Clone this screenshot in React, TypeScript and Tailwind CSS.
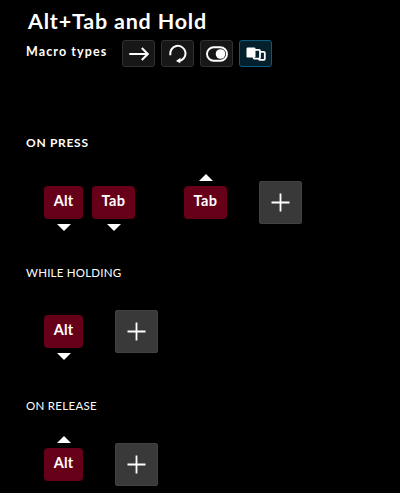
import type { ReactNode } from "react";

function TypeButton({ active, children }: { active?: boolean; children: ReactNode }) {
  return (
    <button
      className={
        "flex h-[27px] w-[33px] items-center justify-center rounded-[3px] border " +
        (active ? "border-[#075c7c] bg-[#03202c]" : "border-[#303030] bg-[#171717]")
      }
    >
      {children}
    </button>
  );
}

function Arrow({ up }: { up?: boolean }) {
  return (
    <svg width="14" height="7" viewBox="0 0 14 7" fill="#fff">
      <path d={up ? "M0 7 7 0l7 7z" : "M0 0h14L7 7z"} />
    </svg>
  );
}

function Key({ label, dir }: { label: string; dir: "up" | "down" }) {
  const wide = label === "Tab";
  return (
    <div className="flex flex-col items-center">
      <div className="h-3">{dir === "up" && <Arrow up />}</div>
      <div
        className={
          "flex h-[33px] items-center justify-center rounded-[4px] bg-[#650018] pb-[2px] text-[14.5px] font-bold leading-none " +
          (wide ? "w-[43px] tracking-[0.5px]" : "w-[39px] tracking-[0.1px]")
        }
      >
        {label}
      </div>
      <div className="flex h-3 items-end">{dir === "down" && <Arrow />}</div>
    </div>
  );
}

function AddButton() {
  return (
    <button className="flex size-[43px] items-center justify-center rounded-[2px] border border-[#424242] bg-[#393939]">
      <svg width="19" height="19" viewBox="0 0 19 19" stroke="#fff" strokeWidth="1.8">
        <path d="M9.5 0.5v18M0.5 9.5h18" />
      </svg>
    </button>
  );
}

export default function App() {
  return (
    <main className="h-[493px] w-[400px] overflow-hidden bg-black font-['Lato',sans-serif] text-white">
      <h1 className="h-10 whitespace-nowrap pl-[28px] pt-[9px] text-[21.5px] font-bold leading-[24px] tracking-[0.8px]">
        Alt+Tab and Hold
      </h1>
      <div className="flex h-[27px] pl-[26px]">
        <span className="w-[96px] whitespace-nowrap pt-[4px] text-[12.5px] font-bold leading-4 tracking-[1.1px]">
          Macro types
        </span>
        <div className="flex gap-[6px]">
          <TypeButton>
            <svg width="20" height="14" viewBox="0 0 20 14" fill="none" stroke="#fff" strokeWidth="2">
              <path d="M0.3 7h18M12.8 1 18.8 7l-6 6" />
            </svg>
          </TypeButton>
          <TypeButton>
            <svg width="18" height="20" viewBox="0 0 18 20" fill="none" stroke="#fff" strokeWidth="2">
              <path d="M1.5 11.2A7.6 7.6 0 1 1 10 17" />
              <path d="M11.5 13.8 7 17l4.2 2.2z" fill="#fff" stroke="none" />
            </svg>
          </TypeButton>
          <TypeButton>
            <svg width="22" height="16" viewBox="0 0 22 16" fill="none">
              <rect x="1" y="1.3" width="20" height="13.4" rx="6.7" stroke="#fff" strokeWidth="1.9" />
              <circle cx="14.5" cy="8" r="4.8" fill="#fff" />
            </svg>
          </TypeButton>
          <TypeButton active>
            <svg width="20" height="14" viewBox="0 0 20 14">
              <rect x="12.8" y="4.8" width="6" height="8" rx="1" fill="none" stroke="#fff" strokeWidth="1.8" />
              <rect x="7.5" y="2.8" width="6.5" height="8.8" rx="1" fill="#03202c" stroke="#fff" strokeWidth="1.8" />
              <rect x="0.5" y="0.5" width="9" height="10" rx="1.2" fill="#fff" />
            </svg>
          </TypeButton>
        </div>
      </div>

      <section className="pt-[68px]">
        <h2 className="h-4 pl-[26px] text-[12px] font-bold leading-4 tracking-[0.7px]">ON PRESS</h2>
        <div className="mt-[23px] flex h-[57px] items-center pl-[44px]">
          <Key label="Alt" dir="down" />
          <div className="ml-[9px]">
            <Key label="Tab" dir="down" />
          </div>
          <div className="ml-[49px]">
            <Key label="Tab" dir="up" />
          </div>
          <div className="ml-8">
            <AddButton />
          </div>
        </div>
      </section>

      <section className="pt-[34px]">
        <h2 className="h-4 pl-[26px] text-[11.5px] leading-4 tracking-[0.22px]">WHILE HOLDING</h2>
        <div className="mt-[22px] flex h-[57px] items-center gap-8 pl-[44px]">
          <Key label="Alt" dir="down" />
          <AddButton />
        </div>
      </section>

      <section className="pt-[38px]">
        <h2 className="h-4 pl-[26px] text-[11.5px] leading-4 tracking-[0.3px]">ON RELEASE</h2>
        <div className="mt-[22px] flex h-[57px] items-center gap-8 pl-[44px]">
          <Key label="Alt" dir="up" />
          <AddButton />
        </div>
      </section>
    </main>
  );
}
